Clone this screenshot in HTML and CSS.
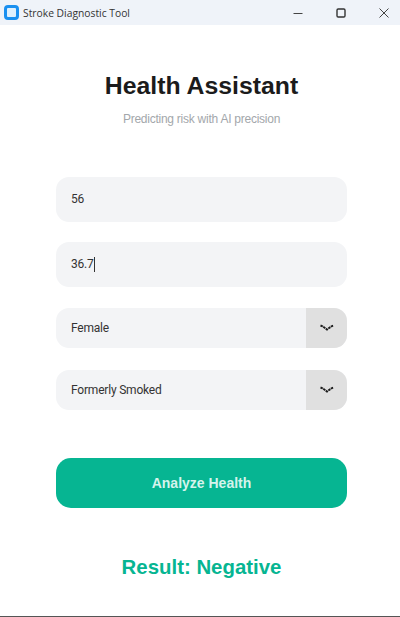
FILE: index.html
```html
<!DOCTYPE html>
<html lang="en">
<head>
    <meta charset="UTF-8">
    <title>Stroke Diagnostic Tool</title>
    <link rel="stylesheet" href="styles.css">
</head>
<body>
<div class="titlebar">
    <div class="app-icon"></div>
    <div class="app-name">Stroke Diagnostic Tool</div>
    <div class="win-btns">
        <svg width="12" height="12" viewBox="0 0 12 12"><path d="M1.500 6.500h9" stroke="#444" stroke-width="1" fill="none"/></svg>
        <svg width="12" height="12" viewBox="0 0 12 12"><rect x="2" y="2" width="8" height="8" rx="1.2" stroke="#333" stroke-width="1.400" fill="none"/></svg>
        <svg width="12" height="12" viewBox="0 0 12 12"><path d="M1.500 1.500l9 9M10.500 1.500l-9 9" stroke="#444" stroke-width="1" fill="none"/></svg>
    </div>
</div>
<div class="main">
    <h1 class="title">Health Assistant</h1>
    <p class="subtitle">Predicting risk with AI precision</p>
    <div class="form">
        <div class="field">56</div>
        <div class="field">36.7<span class="caret"></span></div>
        <div class="select">
            <span class="select-text">Female</span>
            <span class="arrow">
                <svg width="16" height="8" viewBox="0 0 16 8"><path d="M1.500 1.500l2 .8 4.500 3.200 4.500-3.200 2-.8" stroke="#1c1c1c" stroke-width="1.900" stroke-dasharray="2.500 .6" fill="none"/></svg>
            </span>
        </div>
        <div class="select">
            <span class="select-text">Formerly Smoked</span>
            <span class="arrow">
                <svg width="16" height="8" viewBox="0 0 16 8"><path d="M1.500 1.500l2 .8 4.500 3.200 4.500-3.200 2-.8" stroke="#1c1c1c" stroke-width="1.900" stroke-dasharray="2.500 .6" fill="none"/></svg>
            </span>
        </div>
        <div class="btn">Analyze Health</div>
    </div>
    <div class="result">Result: Negative</div>
</div>
</body>
</html>
```

FILE: styles.css
```css
*{
    margin: 0;
    padding: 0;
    box-sizing: border-box;
}
html,body{
    height: 100%;
}
body{
    width: 400px;
    height: 617px;
    overflow: hidden;
    background: #fff;
    font-family: "Roboto", "Liberation Sans", sans-serif;
    display: flex;
    flex-direction: column;
    border-bottom: 1px solid #555;
}
.titlebar{
    height: 25px;
    background: #eff3f9;
    display: flex;
    align-items: center;
    padding-left: 4px;
    flex-shrink: 0;
}
.app-icon{
    width: 15px;
    height: 15px;
    border-radius: 4px;
    background: #dff0fd;
    border: 3px solid #1a90f0;
}
.app-name{
    margin-left: 4px;
    font-family: "Open Sans", "Liberation Sans", sans-serif;
    font-size: 10.300px;
    color: #333;
}
.win-btns{
    margin-left: auto;
    display: flex;
    gap: 31px;
    padding-right: 10px;
}
.main{
    flex: 1;
    padding: 46px 53px 0 56px;
    display: flex;
    flex-direction: column;
    align-items: center;
}
.title{
    font-family: "Liberation Sans", sans-serif;
    font-size: 24.800px;
    line-height: 30px;
    font-weight: bold;
    color: #1b1b1b;
}
.subtitle{
    margin-top: 11px;
    font-family: "Liberation Sans", sans-serif;
    font-size: 12px;
    letter-spacing: -0.25px;
    line-height: 14px;
    color: #a3a7ab;
}
.form{
    width: 100%;
    margin-top: 50.500px;
    display: flex;
    flex-direction: column;
}
.field{
    height: 45px;
    margin-bottom: 20px;
    padding-left: 15px;
    border-radius: 13px;
    background: #f3f4f6;
    font-size: 12px;
    letter-spacing: -0.2px;
    color: #333;
    display: flex;
    align-items: center;
}
.field + .select{
    margin-top: 1.500px;
}
.caret{
    width: 1px;
    height: 15px;
    background: #333;
}
.select{
    height: 40px;
    margin-bottom: 22px;
    border-radius: 13px;
    background: #f3f4f6;
    font-size: 12px;
    letter-spacing: -0.2px;
    color: #333;
    display: flex;
    align-items: center;
    overflow: hidden;
}
.select-text{
    flex: 1;
    padding-left: 15px;
}
.arrow{
    width: 41px;
    height: 100%;
    background: #e0e0e0;
    display: flex;
    align-items: center;
    justify-content: center;
}
.btn{
    height: 49.500px;
    margin-top: 26px;
    border-radius: 15px;
    background: #06b592;
    color: #d5f3ec;
    font-family: "Liberation Sans", sans-serif;
    font-size: 14px;
    font-weight: bold;
    display: flex;
    align-items: center;
    justify-content: center;
}
.result{
    margin-top: 46.500px;
    font-family: "Liberation Sans", sans-serif;
    font-size: 20.400px;
    line-height: 26px;
    font-weight: bold;
    color: #06b592;
}
```
